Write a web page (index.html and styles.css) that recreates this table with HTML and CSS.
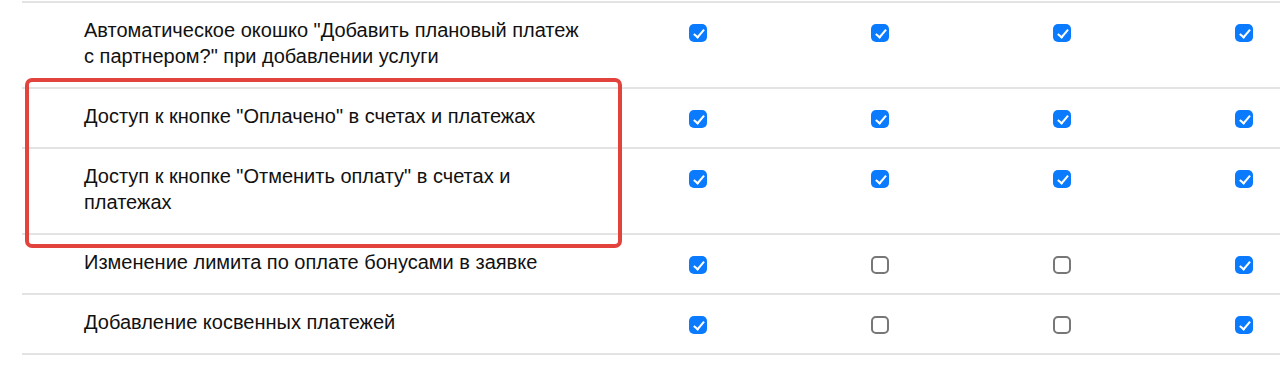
FILE: index.html
```html
<!DOCTYPE html>
<html lang="ru">
<head>
<meta charset="utf-8">
<link rel="stylesheet" href="styles.css">
</head>
<body>
<div class="page">
  <div class="table">
    <div class="row">
      <div class="label">Автоматическое окошко "Добавить плановый платеж с партнером?" при добавлении услуги</div>
      <div class="cell"><span class="cb on"></span></div>
      <div class="cell"><span class="cb on"></span></div>
      <div class="cell"><span class="cb on"></span></div>
      <div class="cell"><span class="cb on"></span></div>
    </div>
    <div class="row">
      <div class="label">Доступ к кнопке "Оплачено" в счетах и платежах</div>
      <div class="cell"><span class="cb on"></span></div>
      <div class="cell"><span class="cb on"></span></div>
      <div class="cell"><span class="cb on"></span></div>
      <div class="cell"><span class="cb on"></span></div>
    </div>
    <div class="row">
      <div class="label">Доступ к кнопке "Отменить оплату" в счетах и платежах</div>
      <div class="cell"><span class="cb on"></span></div>
      <div class="cell"><span class="cb on"></span></div>
      <div class="cell"><span class="cb on"></span></div>
      <div class="cell"><span class="cb on"></span></div>
    </div>
    <div class="row">
      <div class="label">Изменение лимита по оплате бонусами в заявке</div>
      <div class="cell"><span class="cb on"></span></div>
      <div class="cell"><span class="cb"></span></div>
      <div class="cell"><span class="cb"></span></div>
      <div class="cell"><span class="cb on"></span></div>
    </div>
    <div class="row">
      <div class="label">Добавление косвенных платежей</div>
      <div class="cell"><span class="cb on"></span></div>
      <div class="cell"><span class="cb"></span></div>
      <div class="cell"><span class="cb"></span></div>
      <div class="cell"><span class="cb on"></span></div>
    </div>
  </div>
  <div class="highlight"></div>
</div>
</body>
</html>
```
FILE: styles.css
```css
html, body {
  margin: 0;
  padding: 0;
  background: #fff;
  overflow: hidden;
}
body {
  font-family: "Liberation Sans", Arial, sans-serif;
  font-size: 20px;
  color: #111;
}
.page {
  position: relative;
  padding-top: 1px;
}
.table {
  margin-left: 22px;
  border-top: 2px solid #e3e3e3;
}
.row {
  display: grid;
  grid-template-columns: 667px 182px 182px 182px 1fr;
  border-bottom: 2px solid #e3e3e3;
  padding: 16px 0 16px;
  line-height: 26px;
}
.label {
  padding-left: 62px;
  max-width: 500px;
  margin-top: -2px;
  margin-bottom: 2px;
}
.cell {
  display: flex;
  align-items: flex-start;
  padding-top: 5px;
}
.cb {
  display: block;
  width: 18px;
  height: 18px;
  box-sizing: border-box;
  border-radius: 5px;
  border: 2px solid #777;
  background: #fff;
  position: relative;
}
.cb.on {
  border: none;
  background: #0a7bff;
}
.cb.on::after {
  content: "";
  position: absolute;
  left: 6.5px;
  top: 3px;
  width: 4px;
  height: 9px;
  border-right: 2px solid #fff;
  border-bottom: 2px solid #fff;
  transform: rotate(40deg);
}
.highlight {
  position: absolute;
  left: 25px;
  top: 78px;
  width: 597px;
  height: 170px;
  box-sizing: border-box;
  border: 4px solid #e2433d;
  border-radius: 7px;
}
```
